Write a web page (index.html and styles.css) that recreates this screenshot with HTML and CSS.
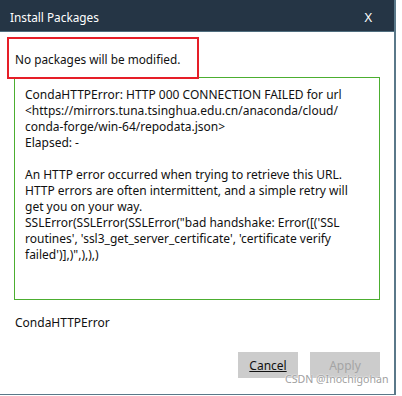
FILE: index.html
```html
<!DOCTYPE html>
<html>
<head>
<meta charset="utf-8">
<link rel="stylesheet" href="styles.css">
</head>
<body>
<div class="dialog">
  <div class="titlebar">
    <span class="title">Install Packages</span>
    <span class="close">X</span>
  </div>
  <div class="content">
    <div class="status">No packages will be modified.</div>
    <div class="details">
      CondaHTTPError: HTTP 000 CONNECTION FAILED for url<br>
      &lt;https://mirrors.tuna.tsinghua.edu.cn/anaconda/cloud/<br>
      conda-forge/win-64/repodata.json&gt;<br>
      Elapsed: -<br>
      <br>
      An HTTP error occurred when trying to retrieve this URL.<br>
      HTTP errors are often intermittent, and a simple retry will<br>
      get you on your way.<br>
      SSLError(SSLError(SSLError("bad handshake: Error([('SSL<br>
      routines', 'ssl3_get_server_certificate', 'certificate verify<br>
      failed')],)",),),)
    </div>
    <div class="errname">CondaHTTPError</div>
    <div class="buttons">
      <button class="btn cancel"><u>Cancel</u></button>
      <button class="btn apply">Apply</button>
    </div>
  </div>
  <div class="highlight"></div>
</div>
<div class="watermark">CSDN @Inochigohan</div>
</body>
</html>
```

FILE: styles.css
```css
html, body {
  margin: 0;
  padding: 0;
  background: #ffffff;
}
body {
  width: 402px;
  height: 396px;
  position: relative;
  overflow: hidden;
  font-family: "Noto Sans", "Open Sans", sans-serif;
  font-size: 12px;
  color: #111111;
}
.dialog {
  position: relative;
  width: 394px;
  height: 394px;
  border-right: 2px solid #5a7889;
  border-bottom: 1px solid #5a7889;
  background: #ffffff;
}
.titlebar {
  background: #253545;
  border-bottom: 1px solid #4f6d7e;
  display: flex;
  align-items: center;
  justify-content: space-between;
  padding: 2px 22px 0 10px;
  box-sizing: border-box;
  height: 32px;
  color: #ffffff;
  font-size: 11.8px;
}
.title {
  line-height: 16px;
}
.close {
  font-size: 13px;
}
.content {
  padding: 0 14px 0 14px;
}
.status {
  height: 45px;
  display: flex;
  align-items: center;
  padding-left: 1px;
  padding-top: 8px;
  box-sizing: border-box;
  line-height: 16px;
  font-size: 11.8px;
}
.details {
  border: 1px solid #4cae30;
  padding: 9px 0 0 10px;
  margin: 0;
  line-height: 16px;
  box-sizing: border-box;
  width: 366px;
  height: 223px;
}
.errname {
  margin-top: 15px;
  padding-left: 1px;
  line-height: 16px;
}
.buttons {
  display: flex;
  justify-content: flex-end;
  gap: 12px;
  margin-top: 21px;
  width: 366px;
}
.btn {
  height: 26px;
  border: none;
  background: #cccccc;
  font-family: inherit;
  font-size: 12px;
  padding: 0;
  color: #111111;
}
.cancel {
  width: 60px;
}
.apply {
  width: 70px;
  color: #a4a4a4;
}
.highlight {
  position: absolute;
  left: 7px;
  top: 37px;
  width: 188px;
  height: 38px;
  border: 2px solid #e61e28;
}
.watermark {
  position: absolute;
  left: 285px;
  top: 372px;
  font-size: 10.6px;
  white-space: nowrap;
  color: #a0a0a0;
  text-shadow: 0 0 2px #ffffff, 0 0 1px #ffffff;
}
```
